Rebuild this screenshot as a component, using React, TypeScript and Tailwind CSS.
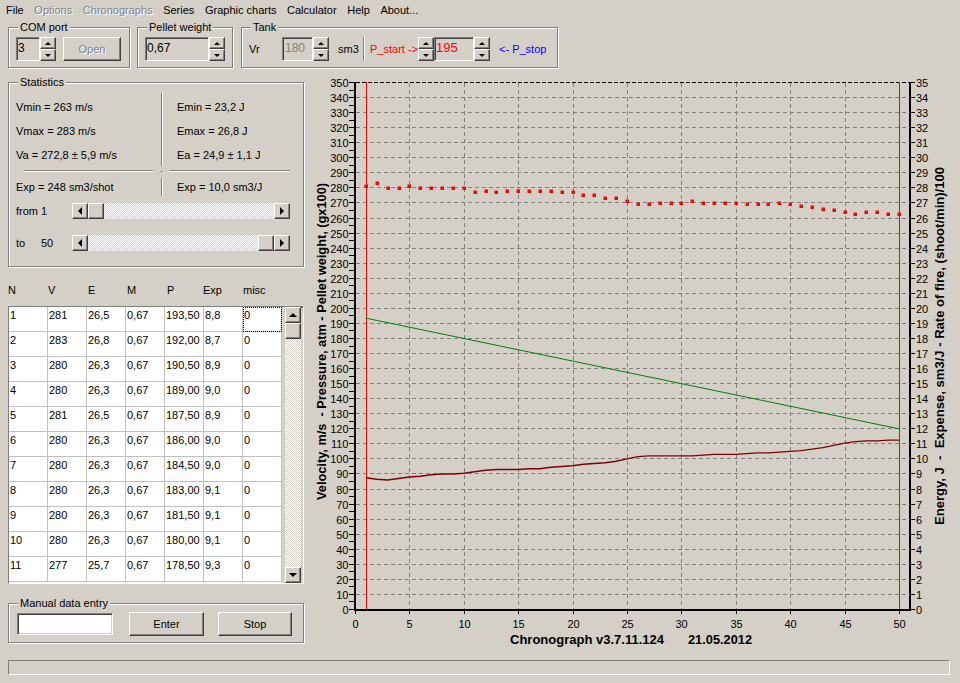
import React from "react";

// classic win32 borders
const raised =
  "bg-[#d4d0c8] border border-t-white border-l-white border-r-[#404040] border-b-[#404040] shadow-[inset_-1px_-1px_0_#808080]";
const sunken =
  "border border-t-[#808080] border-l-[#808080] border-r-white border-b-white shadow-[inset_1px_1px_0_#404040,inset_-1px_-1px_0_#d4d0c8]";
const etched = "border border-[#808080] shadow-[inset_1px_1px_0_#fff,1px_1px_0_#fff]";
const track = "bg-[repeating-conic-gradient(#ffffff_0_25%,#d4d0c8_0_50%)] bg-[length:2px_2px]";

const rows = [
  ["1", "281", "26,5", "0,67", "193,50", "8,8", "0"],
  ["2", "283", "26,8", "0,67", "192,00", "8,7", "0"],
  ["3", "280", "26,3", "0,67", "190,50", "8,9", "0"],
  ["4", "280", "26,3", "0,67", "189,00", "9,0", "0"],
  ["5", "281", "26,5", "0,67", "187,50", "8,9", "0"],
  ["6", "280", "26,3", "0,67", "186,00", "9,0", "0"],
  ["7", "280", "26,3", "0,67", "184,50", "9,0", "0"],
  ["8", "280", "26,3", "0,67", "183,00", "9,1", "0"],
  ["9", "280", "26,3", "0,67", "181,50", "9,1", "0"],
  ["10", "280", "26,3", "0,67", "180,00", "9,1", "0"],
  ["11", "277", "25,7", "0,67", "178,50", "9,3", "0"],
];

const velocity = [
  281, 283, 280, 280, 281, 280, 280, 280, 280, 280,
  277, 278, 277, 278, 278, 278, 278, 278, 277, 277,
  275, 275, 273, 273, 271, 269, 269, 270, 270, 270,
  271, 270, 270, 270, 270, 269, 269, 269, 270, 269,
  268, 267, 266, 265, 264, 263, 264, 264, 263, 263,
];

// expense x10, read off the plot
const expense = [
  87.5, 86.5, 86, 87, 88, 88.5, 89.5, 90, 90, 90.5,
  91.5, 92.5, 93, 93, 93, 93.5, 93.5, 94.5, 95, 95.5,
  96.5, 97, 97.5, 98.5, 100, 101.5, 102, 102, 102, 102,
  102, 102.5, 103, 103, 103, 103.5, 104, 104, 104.5, 105,
  105.5, 106.5, 107.5, 109, 110.5, 111.5, 112, 112, 112.5, 112.5,
];

const X = (v: number) => 355 + v * 10.88;
const Y = (v: number) => 609.5 - v * 1.5057;

function Tri({ dir, small }: { dir: "up" | "down" | "left" | "right"; small?: boolean }) {
  if (small) {
    return dir === "up" ? (
      <div className="h-0 w-0 border-x-[3px] border-b-[3px] border-x-transparent border-b-black" />
    ) : (
      <div className="h-0 w-0 border-x-[3px] border-t-[3px] border-x-transparent border-t-black" />
    );
  }
  if (dir === "up")
    return <div className="h-0 w-0 border-x-[4px] border-b-[4px] border-x-transparent border-b-black" />;
  if (dir === "down")
    return <div className="h-0 w-0 border-x-[4px] border-t-[4px] border-x-transparent border-t-black" />;
  if (dir === "left")
    return <div className="h-0 w-0 border-y-[4px] border-r-[4px] border-y-transparent border-r-black" />;
  return <div className="h-0 w-0 border-y-[4px] border-l-[4px] border-y-transparent border-l-black" />;
}

function Spin() {
  return (
    <div className="flex w-[16px] shrink-0 flex-col">
      <div className={`${raised} flex h-[12px] items-center justify-center`}>
        <Tri dir="up" small />
      </div>
      <div className={`${raised} flex h-[12px] items-center justify-center`}>
        <Tri dir="down" small />
      </div>
    </div>
  );
}

function Group({ label, className, children }: { label: string; className?: string; children?: React.ReactNode }) {
  return (
    <div className={`relative ${etched} ${className ?? ""}`}>
      <span className="absolute left-[9px] top-[-8px] bg-[#d4d0c8] px-[2px] leading-[14px]">{label}</span>
      {children}
    </div>
  );
}

function HScroll({ thumb }: { thumb: "left" | "right" }) {
  return (
    <div className="flex h-[16px] w-[218px]">
      <div className={`${raised} flex w-[16px] items-center justify-center`}>
        <Tri dir="left" />
      </div>
      {thumb === "left" && <div className={`${raised} w-[16px]`} />}
      <div className={`flex-1 ${track}`} />
      {thumb === "right" && <div className={`${raised} w-[16px]`} />}
      <div className={`${raised} flex w-[16px] items-center justify-center`}>
        <Tri dir="right" />
      </div>
    </div>
  );
}

function VSep({ className }: { className?: string }) {
  return <div className={`w-[2px] border-l border-r border-l-[#808080] border-r-white ${className ?? ""}`} />;
}

function HSep({ className }: { className?: string }) {
  return <div className={`h-[2px] border-t border-b border-t-[#808080] border-b-white ${className ?? ""}`} />;
}

function Statistics() {
  return (
    <Group label="Statistics" className="mt-[8px] h-[185px] w-[296px]">
      <div className="mt-[10px] flex h-[74px]">
        <div className="w-[152px] pl-[7px] pt-[2px]">
          <div className="flex h-[24px] items-center">Vmin = 263 m/s</div>
          <div className="flex h-[24px] items-center">Vmax = 283 m/s</div>
          <div className="flex h-[24px] items-center">Va = 272,8 ± 5,9 m/s</div>
        </div>
        <VSep className="h-[73px]" />
        <div className="pl-[14px] pt-[2px]">
          <div className="flex h-[24px] items-center">Emin = 23,2 J</div>
          <div className="flex h-[24px] items-center">Emax = 26,8 J</div>
          <div className="flex h-[24px] items-center">Ea = 24,9 ± 1,1 J</div>
        </div>
      </div>
      <div className="flex h-[8px] items-start pt-[3px]">
        <HSep className="ml-[15px] w-[129px]" />
        <div className="ml-[8px] mt-[1px] h-px w-px bg-[#404040]" />
        <HSep className="ml-[7px] w-[121px]" />
      </div>
      <div className="flex h-[24px] items-center">
        <div className="w-[152px] pl-[7px]">Exp = 248 sm3/shot</div>
        <VSep className="h-[18px]" />
        <div className="pl-[14px]">Exp = 10,0 sm3/J</div>
      </div>
      <div className="flex h-[24px] items-center pl-[7px]">
        <div className="w-[56px]">from 1</div>
        <HScroll thumb="left" />
      </div>
      <div className="mt-[8px] flex h-[24px] items-center pl-[7px]">
        <div className="flex w-[56px]">
          <span className="w-[25px]">to</span>
          <span>50</span>
        </div>
        <HScroll thumb="right" />
      </div>
    </Group>
  );
}

function DataGrid() {
  return (
    <div className={`mt-[9px] flex h-[278px] w-[296px] ${sunken}`}>
      <div className="w-[273px] overflow-hidden bg-white">
        {rows.map((r, ri) => (
          <div key={ri} className="flex">
            {r.map((c, ci) => (
              <div
                key={ci}
                className="relative h-[25px] w-[39px] shrink-0 border-b border-r border-[#c0c0c0] pl-[1px] pt-[2px] leading-[13px]"
              >
                {c}
                {ri === 0 && ci === 6 && (
                  <div className="absolute -bottom-px -right-px left-0 top-0 border border-dotted border-black" />
                )}
              </div>
            ))}
          </div>
        ))}
      </div>
      <div className="w-[3px] bg-[#d4d0c8]" />
      <div className="flex w-[16px] flex-col">
        <div className={`${raised} flex h-[16px] items-center justify-center`}>
          <Tri dir="up" />
        </div>
        <div className={`${raised} h-[16px]`} />
        <div className={`flex-1 ${track}`} />
        <div className={`${raised} flex h-[16px] items-center justify-center`}>
          <Tri dir="down" />
        </div>
      </div>
    </div>
  );
}

function Chart() {
  const hLines = Array.from({ length: 34 }, (_, i) => (i + 1) * 10);
  const vLines = [5, 10, 15, 20, 25, 30, 35, 40, 45];
  const leftTicks = Array.from({ length: 71 }, (_, i) => i * 5);
  const labels = Array.from({ length: 36 }, (_, i) => i * 10);
  const xLabels = Array.from({ length: 11 }, (_, i) => i * 5);
  const expPts = expense.map((v, i) => `${X(i + 1)},${Y(v)}`).join(" ");

  return (
    <svg width={650} height={586} className="block shrink-0" fontFamily="'Liberation Sans', Arial, sans-serif">
      <g transform="translate(-310,-74)">
        {hLines.map((v) => {
          const y = Math.floor(Y(v)) + 0.5;
          return <line key={v} x1={356} x2={909} y1={y} y2={y} stroke="#808080" strokeDasharray="4 3" />;
        })}
        {vLines.map((v) => {
          const x = Math.round(X(v)) + 0.5;
          return <line key={v} x1={x} x2={x} y1={83} y2={609} stroke="#808080" strokeDasharray="4 3" />;
        })}
        <line x1={356} x2={909} y1={82.5} y2={82.5} stroke="#000" strokeDasharray="4 2" />

        {/* range markers */}
        <line x1={366.5} x2={366.5} y1={82} y2={609} stroke="#ff0000" />
        <line x1={899.5} x2={899.5} y1={82} y2={609} stroke="#ff0000" />

        <line x1={X(1)} y1={Y(193.5)} x2={X(50)} y2={Y(120)} stroke="#008000" />
        <polyline points={expPts} fill="none" stroke="#800000" strokeWidth={1.4} />
        {velocity.map((v, i) => (
          <rect key={i} x={Math.round(X(i + 1)) - 1.5} y={Math.round(Y(v)) - 1.5} width={3.5} height={3.5} fill="#ff0000" />
        ))}

        {/* axes */}
        <rect x={354} y={82} width={2} height={529} fill="#000" />
        <rect x={909} y={82} width={2} height={529} fill="#000" />
        <rect x={354} y={609} width={557} height={2} fill="#000" />

        {leftTicks.map((v) => {
          const y = Math.floor(Y(v)) + 0.5;
          return <line key={v} x1={349} x2={354} y1={y} y2={y} stroke="#000" />;
        })}
        {labels.map((v) => {
          const y = Math.floor(Y(v)) + 0.5;
          return (
            <g key={v}>
              <line x1={911} x2={915} y1={y} y2={y} stroke="#000" />
              <text x={348.5} y={y} textAnchor="end" dominantBaseline="central" fontSize={11}>
                {v}
              </text>
              <text x={916} y={y} dominantBaseline="central" fontSize={11}>
                {v / 10}
              </text>
            </g>
          );
        })}
        {xLabels.map((v) => {
          const x = Math.round(X(v)) + 0.5;
          return (
            <g key={v}>
              <line x1={x} x2={x} y1={611} y2={614} stroke="#000" />
              <text x={x} y={624} textAnchor="middle" dominantBaseline="central" fontSize={11}>
                {v}
              </text>
            </g>
          );
        })}

        <text
          transform="translate(321,341.5) rotate(-90)"
          textAnchor="middle"
          dominantBaseline="central"
          fontSize={13}
          fontWeight="bold"
          textLength={317}
          lengthAdjust="spacingAndGlyphs"
          className="whitespace-pre"
        >
          Velocity, m/s  - Pressure, atm - Pellet weight, (gx100)
        </text>
        <text
          transform="translate(939,346) rotate(-90)"
          textAnchor="middle"
          dominantBaseline="central"
          fontSize={13}
          fontWeight="bold"
          textLength={358}
          lengthAdjust="spacingAndGlyphs"
          className="whitespace-pre"
        >
          Energy, J  -  Expense, sm3/J - Rate of fire, (shoot/min)/100
        </text>
        <text x={510} y={639} dominantBaseline="central" fontSize={13} fontWeight="bold" textLength={154} lengthAdjust="spacingAndGlyphs">
          Chronograph v3.7.11.124
        </text>
        <text x={688} y={639} dominantBaseline="central" fontSize={13} fontWeight="bold" textLength={64} lengthAdjust="spacingAndGlyphs">
          21.05.2012
        </text>
      </g>
    </svg>
  );
}

export default function App() {
  const disabled = "text-[#808080] [text-shadow:1px_1px_0_#fff]";
  return (
    <div className="h-[683px] w-[960px] overflow-hidden bg-[#d4d0c8] font-['Liberation_Sans',Arial,sans-serif] text-[11px] leading-[14px] text-black">
      {/* menu */}
      <div className="flex h-[20px] items-center gap-[10.6px] pl-[6px]">
        <span>File</span>
        <span className={disabled}>Options</span>
        <span className={disabled}>Chronographs</span>
        <span>Series</span>
        <span>Graphic charts</span>
        <span>Calculator</span>
        <span>Help</span>
        <span>About...</span>
      </div>

      {/* toolbar groups */}
      <div className="flex h-[54px] items-start pl-[8px] pt-[7px]">
        <Group label="COM port" className="flex h-[41px] w-[122px] items-start pl-[7px] pt-[9px]">
          <div className={`h-[24px] w-[24px] ${sunken} pl-[1px] text-[12px] leading-[20px]`}>3</div>
          <Spin />
          <div className={`${raised} ml-[7px] flex h-[24px] w-[58px] items-center justify-center ${disabled}`}>Open</div>
        </Group>
        <Group label="Pellet weight" className="ml-[7px] flex h-[41px] w-[96px] items-start pl-[7px] pt-[9px]">
          <div className={`h-[24px] w-[64px] ${sunken} pl-[1px] text-[12px] leading-[20px]`}>0,67</div>
          <Spin />
        </Group>
        <Group label="Tank" className="ml-[8px] flex h-[41px] w-[317px] items-start pl-[7px] pt-[9px]">
          <div className="flex h-[24px] items-center">
            <span className="w-[33px]">Vr</span>
            <div className={`h-[24px] w-[31px] ${sunken} pl-[2px] text-[12px] leading-[20px] text-[#808080]`}>180</div>
            <Spin />
            <span className="ml-[9px] w-[25px]">sm3</span>
            <VSep className="h-[24px]" />
            <span className="ml-[5px] w-[48px] text-[#ff0000]">P_start -&gt;</span>
            <Spin />
            <div className={`h-[24px] w-[40px] ${sunken} pl-[1px] text-[13px] leading-[20px] text-[#ff0000]`}>195</div>
            <Spin />
            <span className="ml-[9px] text-[#0000ff]">&lt;- P_stop</span>
          </div>
        </Group>
      </div>

      {/* body */}
      <div className="flex h-[586px]">
        <div className="w-[310px] shrink-0 pl-[8px]">
          <Statistics />
          <div className="mt-[16px] flex h-[14px]">
            <span className="w-[40px]">N</span>
            <span className="w-[40px]">V</span>
            <span className="w-[39px]">E</span>
            <span className="w-[40px]">M</span>
            <span className="w-[36px]">P</span>
            <span className="w-[40px]">Exp</span>
            <span>misc</span>
          </div>
          <DataGrid />
          <Group label="Manual data entry" className="mt-[19px] flex h-[40px] w-[296px] items-start pl-[8px] pt-[8px]">
            <div className="mt-[1px] h-[22px] w-[96px] bg-white border border-t-[#808080] border-l-[#808080] border-r-white border-b-white shadow-[inset_1px_1px_0_#404040,inset_-1px_-1px_0_#d4d0c8]" />
            <div className={`${raised} ml-[16px] flex h-[24px] w-[75px] items-center justify-center`}>Enter</div>
            <div className={`${raised} ml-[14px] flex h-[24px] w-[74px] items-center justify-center`}>Stop</div>
          </Group>
        </div>
        <Chart />
      </div>

      {/* status bar */}
      <div className="ml-[8px] h-[15px] w-[942px] border border-t-[#808080] border-l-[#808080] border-r-white border-b-white" />
    </div>
  );
}
